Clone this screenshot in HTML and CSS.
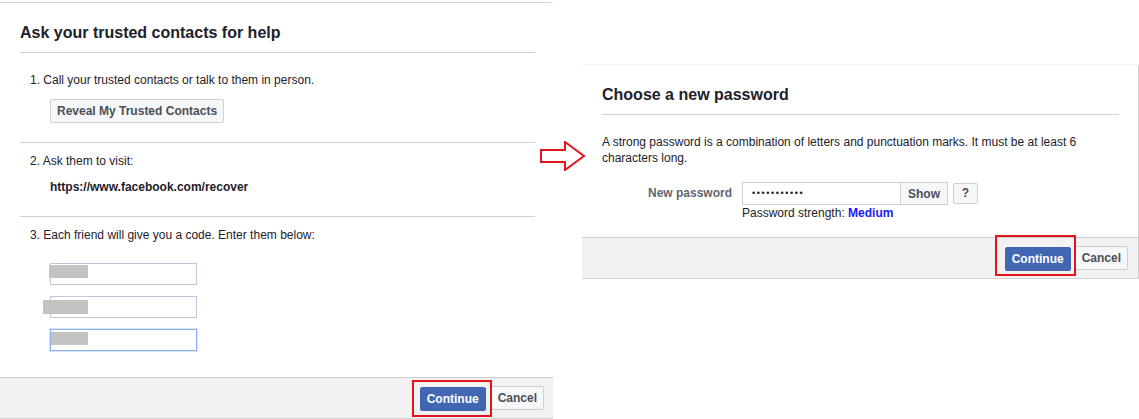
FILE: index.html
```html
<!DOCTYPE html>
<html>
<head>
<meta charset="utf-8">
<title>Recover account</title>
<link rel="stylesheet" href="styles.css">
</head>
<body>
<div class="page">
  <section class="dialog dialog-left">
    <div class="dialog-body">
      <h2 class="dialog-title">Ask your trusted contacts for help</h2>
      <div class="step step-first">
        <p class="step-text">1. Call your trusted contacts or talk to them in person.</p>
        <button class="btn btn-plain step-action">Reveal My Trusted Contacts</button>
      </div>
      <div class="step">
        <p class="step-text">2. Ask them to visit:</p>
        <p class="step-link">https://www.facebook.com/recover</p>
      </div>
      <div class="step step-last">
        <p class="step-text">3. Each friend will give you a code. Enter them below:</p>
        <div class="codes">
          <div class="code-field"><span class="code-input"></span><span class="redact redact-a"></span></div>
          <div class="code-field"><span class="code-input"></span><span class="redact redact-b"></span></div>
          <div class="code-field"><span class="code-input is-focused"></span><span class="redact redact-c"></span></div>
        </div>
      </div>
    </div>
    <div class="dialog-footer">
      <span class="highlight"><button class="btn btn-primary">Continue</button></span>
      <button class="btn btn-plain">Cancel</button>
    </div>
  </section>

  <svg class="arrow" width="46" height="30" viewBox="0 0 46 30">
    <polygon points="1,9 25,9 25,1 44,15 25,29 25,21 1,21" fill="#fff" stroke="#e3141c" stroke-width="2" stroke-linejoin="miter"/>
  </svg>

  <section class="dialog dialog-right">
    <div class="dialog-body">
      <h2 class="dialog-title">Choose a new password</h2>
      <p class="intro">A strong password is a combination of letters and punctuation marks. It must be at least 6 characters long.</p>
      <div class="pw-row">
        <span class="pw-label">New password</span>
        <div class="pw-controls">
          <div class="pw-line">
            <span class="pw-input">•••••••••••</span>
            <button class="btn btn-plain pw-show">Show</button>
            <button class="btn btn-plain pw-help">?</button>
          </div>
          <p class="pw-strength">Password strength: <strong>Medium</strong></p>
        </div>
      </div>
    </div>
    <div class="dialog-footer">
      <span class="highlight highlight-tall"><button class="btn btn-primary">Continue</button></span>
      <button class="btn btn-plain">Cancel</button>
    </div>
  </section>
</div>
</body>
</html>
```

FILE: styles.css
```css
* { box-sizing: border-box; }

body {
  margin: 0;
  background: #fff;
  font-family: "Liberation Sans", Arial, Helvetica, sans-serif;
  font-size: 12px;
  color: #1d2129;
}

.page {
  position: relative;
  display: flex;
  align-items: flex-start;
  padding-top: 2px;
  height: 419px;
  overflow: hidden;
}

.dialog {
  display: flex;
  flex-direction: column;
  background: #fff;
}

.dialog-left {
  width: 553px;
  height: 417px;
  border-top: 1px solid #d3d3d3;
  border-top-right-radius: 3px;
}

.dialog-right {
  margin-left: 29px;
  margin-top: 62px;
  width: 557px;
  height: 215px;
  border-top: 1px solid #f3f3f3;
  border-right: 1px solid #cfcfcf;
  border-top-right-radius: 3px;
}

.dialog-body {
  flex: 1;
  padding: 0 18px 0 20px;
}

.dialog-right .dialog-body {
  padding: 0 19px 0 20px;
}

.dialog-title {
  margin: 0;
  padding: 20px 0 9px;
  font-size: 16px;
  line-height: 20px;
  font-weight: bold;
  color: #1d2129;
  border-bottom: 1px solid #d1d1d1;
}

.step {
  padding: 10px 0 21px 10px;
  border-bottom: 1px solid #d1d1d1;
}

.step-first {
  padding-top: 19px;
  padding-bottom: 19px;
}

.step-last {
  border-bottom: none;
  padding-bottom: 0;
}

.step-text {
  margin: 0;
  line-height: 16px;
}

.step-action {
  margin: 11px 0 0 20px;
  padding: 0 7px;
}

.step-link {
  margin: 10px 0 0 20px;
  line-height: 16px;
  font-weight: bold;
}

.codes {
  display: flex;
  flex-direction: column;
  gap: 11px;
  margin: 20px 0 0 20px;
}

.code-field {
  position: relative;
  width: 147px;
  height: 22px;
}

.code-input {
  display: block;
  width: 100%;
  height: 100%;
  border: 1px solid #bdc7d8;
  background: #fff;
}

.code-input.is-focused {
  border-color: #8fb3ec;
  box-shadow: 0 0 0 1px #d6e3f8;
}

.redact {
  position: absolute;
  background: #c3c3c3;
}

.redact-a { left: -1px; top: 2px; width: 39px; height: 13px; }
.redact-b { left: -7px; top: 4px; width: 45px; height: 14px; }
.redact-c { left: 1px; top: 3px; width: 37px; height: 13px; }

.dialog-footer {
  display: flex;
  align-items: center;
  justify-content: flex-end;
  height: 42px;
  padding-right: 9px;
  background: #f2f2f2;
  border-top: 1px solid #cccccc;
  border-bottom: 1px solid #d6d6d6;
}

.dialog-right .dialog-footer {
  padding-right: 10px;
}

.highlight {
  position: relative;
  z-index: 1;
  display: inline-flex;
  padding: 5px 4px 4px 6px;
  border: 2px solid #e3141c;
  margin-right: -1px;
}

.highlight-tall {
  padding: 10px 3px 3px 8px;
  margin-top: -5px;
  margin-right: -1px;
}

.btn {
  font-family: inherit;
  font-size: 12px;
  font-weight: bold;
  height: 24px;
  line-height: 22px;
  padding: 0 6px;
  border-radius: 2px;
  cursor: pointer;
}

.btn-plain {
  background: #f6f7f9;
  border: 1px solid #ced0d4;
  color: #4b4f56;
}

.btn-primary {
  background: #4267b2;
  border: 1px solid #4267b2;
  color: #fff;
}

.intro {
  margin: 19px 0 0;
  line-height: 16px;
  color: #1d2129;
}

.pw-row {
  display: flex;
  margin-top: 16px;
}

.pw-label {
  width: 140px;
  padding-right: 10px;
  text-align: right;
  line-height: 23px;
  font-weight: bold;
  color: #606770;
}

.pw-line {
  display: flex;
  align-items: center;
}

.pw-input {
  display: inline-block;
  width: 158px;
  height: 23px;
  line-height: 21px;
  padding-left: 9px;
  border: 1px solid #ccd0d5;
  border-right: none;
  font-size: 9px;
  letter-spacing: 1.6px;
  color: #1d2129;
}

.pw-show {
  height: 23px;
  border-radius: 0;
  padding: 0 7px;
}

.pw-help {
  margin-left: 5px;
  height: 21px;
  line-height: 19px;
  width: 25px;
  padding: 0;
}

.pw-strength {
  margin: 1px 0 0;
  line-height: 14px;
}

.pw-strength strong {
  color: #1a1aff;
}

.arrow {
  position: absolute;
  left: 540px;
  top: 141px;
}
```
